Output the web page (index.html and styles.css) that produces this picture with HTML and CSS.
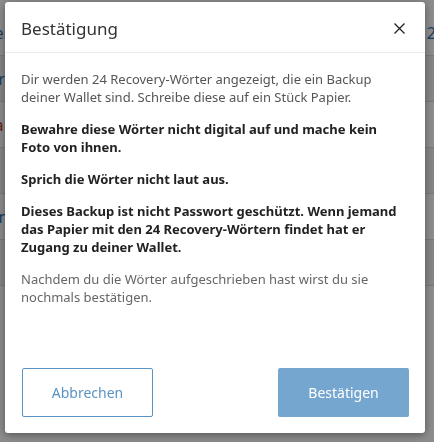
FILE: index.html
```html
<!DOCTYPE html>
<html lang="de">
<head>
    <meta charset="UTF-8">
    <meta name="viewport" content="width=device-width, initial-scale=1.0">
    <title>Bestätigung</title>
    <link rel="stylesheet" href="styles.css">
</head>
<body>

<div class="page">
    <div class="row"><span class="link">Menu</span><span class="link">12 Ix</span></div>
    <div class="row band"><span class="link">Var</span><span class="link">hi</span></div>
    <div class="row"><span class="warn">Sta</span><span></span></div>
    <div class="row band"><span></span><span>Ve</span></div>
    <div class="row"><span class="link">Son</span><span class="link">pa</span></div>
    <div class="row band"><span></span><span class="link">co</span></div>
</div>

<div class="overlay">
    <div class="modal">
        <div class="modal-header">
            <h4 class="modal-title">Bestätigung</h4>
            <span class="close">
                <svg width="11" height="11" viewBox="0 0 11 11"><path d="M0.5 0.5L10.5 10.5M10.5 0.5L0.5 10.5" stroke="#222" stroke-width="1.3"/></svg>
            </span>
        </div>
        <div class="modal-body">
            <p>Dir werden 24 Recovery-Wörter angezeigt, die ein Backup deiner Wallet sind. Schreibe diese auf ein Stück Papier.</p>
            <p class="strong">Bewahre diese Wörter nicht digital auf und mache kein Foto von ihnen.</p>
            <p class="strong">Sprich die Wörter nicht laut aus.</p>
            <p class="strong">Dieses Backup ist nicht Passwort geschützt. Wenn jemand das Papier mit den 24 Recovery-Wörtern findet hat er Zugang zu deiner Wallet.</p>
            <p class="muted">Nachdem du die Wörter aufgeschrieben hast wirst du sie nochmals bestätigen.</p>
        </div>
        <div class="modal-footer">
            <button class="btn btn-outline">Abbrechen</button>
            <button class="btn btn-primary">Bestätigen</button>
        </div>
    </div>
</div>

</body>
</html>
```

FILE: styles.css
```css
body {
    margin: 0;
    font-family: "Noto Sans", sans-serif;
    font-size: 13px;
    width: 434px;
    height: 442px;
    overflow: hidden;
    background-color: #ffffff;
}
.page {
    padding-top: 10px;
}
.row {
    display: flex;
    justify-content: space-between;
    height: 45px;
    align-items: center;
    border-bottom: 1px solid #ddd;
    font-size: 16px;
    margin: 0 -20px;
}
.band {
    background-color: #f2f2f2;
}
.link {
    color: #2a6fb0;
}
.warn {
    color: #c0392b;
}
.overlay {
    position: fixed;
    inset: 0;
    background-color: rgba(0, 0, 0, 0.45);
    padding: 2px 9px 9px 5px;
}
.modal {
    background-color: #fff;
    width: 420px;
    height: 431px;
    border-radius: 3px;
    box-shadow: 0 2px 8px rgba(0, 0, 0, 0.4);
    display: flex;
    flex-direction: column;
}
.modal-header {
    display: flex;
    justify-content: space-between;
    align-items: center;
    height: 51px;
    padding: 2px 20px 0 16px;
    box-sizing: border-box;
    border-bottom: 1px solid #eaeaea;
}
.modal-title {
    margin: 0;
    font-size: 17px;
    font-weight: normal;
    color: #333;
}
.close {
    display: flex;
}
.modal-body {
    flex: 1;
    padding: 17px 16px 0 16px;
    line-height: 18px;
    color: #555;
}
.modal-body p {
    margin: 0 0 14px 0;
}
.strong {
    font-weight: bold;
    color: #222;
}
.muted {
    color: #666;
}
.modal-footer {
    display: flex;
    justify-content: space-between;
    padding: 0 16px 16px 17px;
}
.btn {
    width: 131px;
    height: 49px;
    font-family: "Noto Sans", sans-serif;
    font-size: 14px;
    border-radius: 2px;
    cursor: pointer;
}
.btn-outline {
    background-color: #fff;
    border: 1px solid #5b93c3;
    color: #5b93c3;
}
.btn-primary {
    background-color: #74a6cf;
    border: none;
    color: #fff;
}
```
